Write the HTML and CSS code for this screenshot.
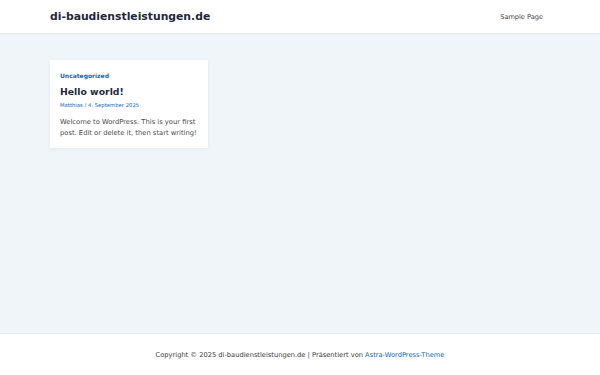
FILE: index.html
```html
<!DOCTYPE html>
<html lang="de">
<head>
<meta charset="utf-8">
<title>di-baudienstleistungen.de</title>
<link rel="stylesheet" href="styles.css">
</head>
<body>
<header class="site-header">
  <div class="header-inner">
    <a class="site-title" href="#">di-baudienstleistungen.de</a>
    <nav class="main-nav"><a href="#">Sample Page</a></nav>
  </div>
</header>
<main class="site-content">
  <div class="posts">
    <article class="post-card">
      <a class="cat" href="#">Uncategorized</a>
      <h2 class="post-title">Hello world!</h2>
      <div class="meta"><a href="#">Matthias</a> / 4. September 2025</div>
      <p class="excerpt">Welcome to WordPress. This is your first post. Edit or delete it, then start writing!</p>
    </article>
  </div>
</main>
<footer class="site-footer">
  <p>Copyright © 2025 di-baudienstleistungen.de | Präsentiert von <a href="#">Astra-WordPress-Theme</a></p>
</footer>
</body>
</html>
```
FILE: styles.css
```css
* { box-sizing: border-box; }
html, body { margin: 0; padding: 0; height: 100%; }
body {
  font-family: "DejaVu Sans", sans-serif;
  background: #f0f5fa;
  color: #3a3a3a;
  display: flex;
  flex-direction: column;
  min-height: 375px;
}
a { text-decoration: none; }
.site-header {
  background: #fff;
  border-bottom: 1px solid #e6eaee;
  height: 34px;
  flex: none;
}
.header-inner {
  height: 33px;
  padding: 0 57px 0 50px;
  display: flex;
  align-items: center;
  justify-content: space-between;
}
.site-title {
  font-size: 10.8px;
  font-weight: bold;
  color: #1e293b;
  line-height: 14px;
}
.main-nav a {
  display: block;
  font-size: 6.6px;
  line-height: 14px;
  color: #3f3f3f;
}
.site-content {
  flex: 1;
  padding: 26px 50px 0;
}
.posts { display: flex; }
.post-card {
  width: 158px;
  background: #fff;
  padding: 11px 10px 10px;
  box-shadow: 0 1px 4px rgba(0,0,0,0.06);
}
.cat {
  display: block;
  font-size: 6px;
  font-weight: bold;
  color: #0b6ab8;
  line-height: 9px;
}
.post-title {
  margin: 6px 0 0;
  font-size: 9.3px;
  font-weight: bold;
  color: #1e293b;
  line-height: 12px;
}
.meta {
  margin-top: 3px;
  font-size: 5.3px;
  color: #0b6ab8;
  line-height: 8px;
}
.meta a { color: #0b6ab8; }
.excerpt {
  margin: 8px 0 0;
  font-size: 6.75px;
  line-height: 10.5px;
  color: #4b4b4b;
}
.site-footer {
  flex: none;
  background: #fff;
  border-top: 1px solid #e6eaee;
  height: 42px;
  display: flex;
  align-items: center;
  justify-content: center;
}
.site-footer p {
  margin: 0;
  font-size: 6.7px;
  color: #3a3a3a;
}
.site-footer a { color: #0b6ab8; }
```
